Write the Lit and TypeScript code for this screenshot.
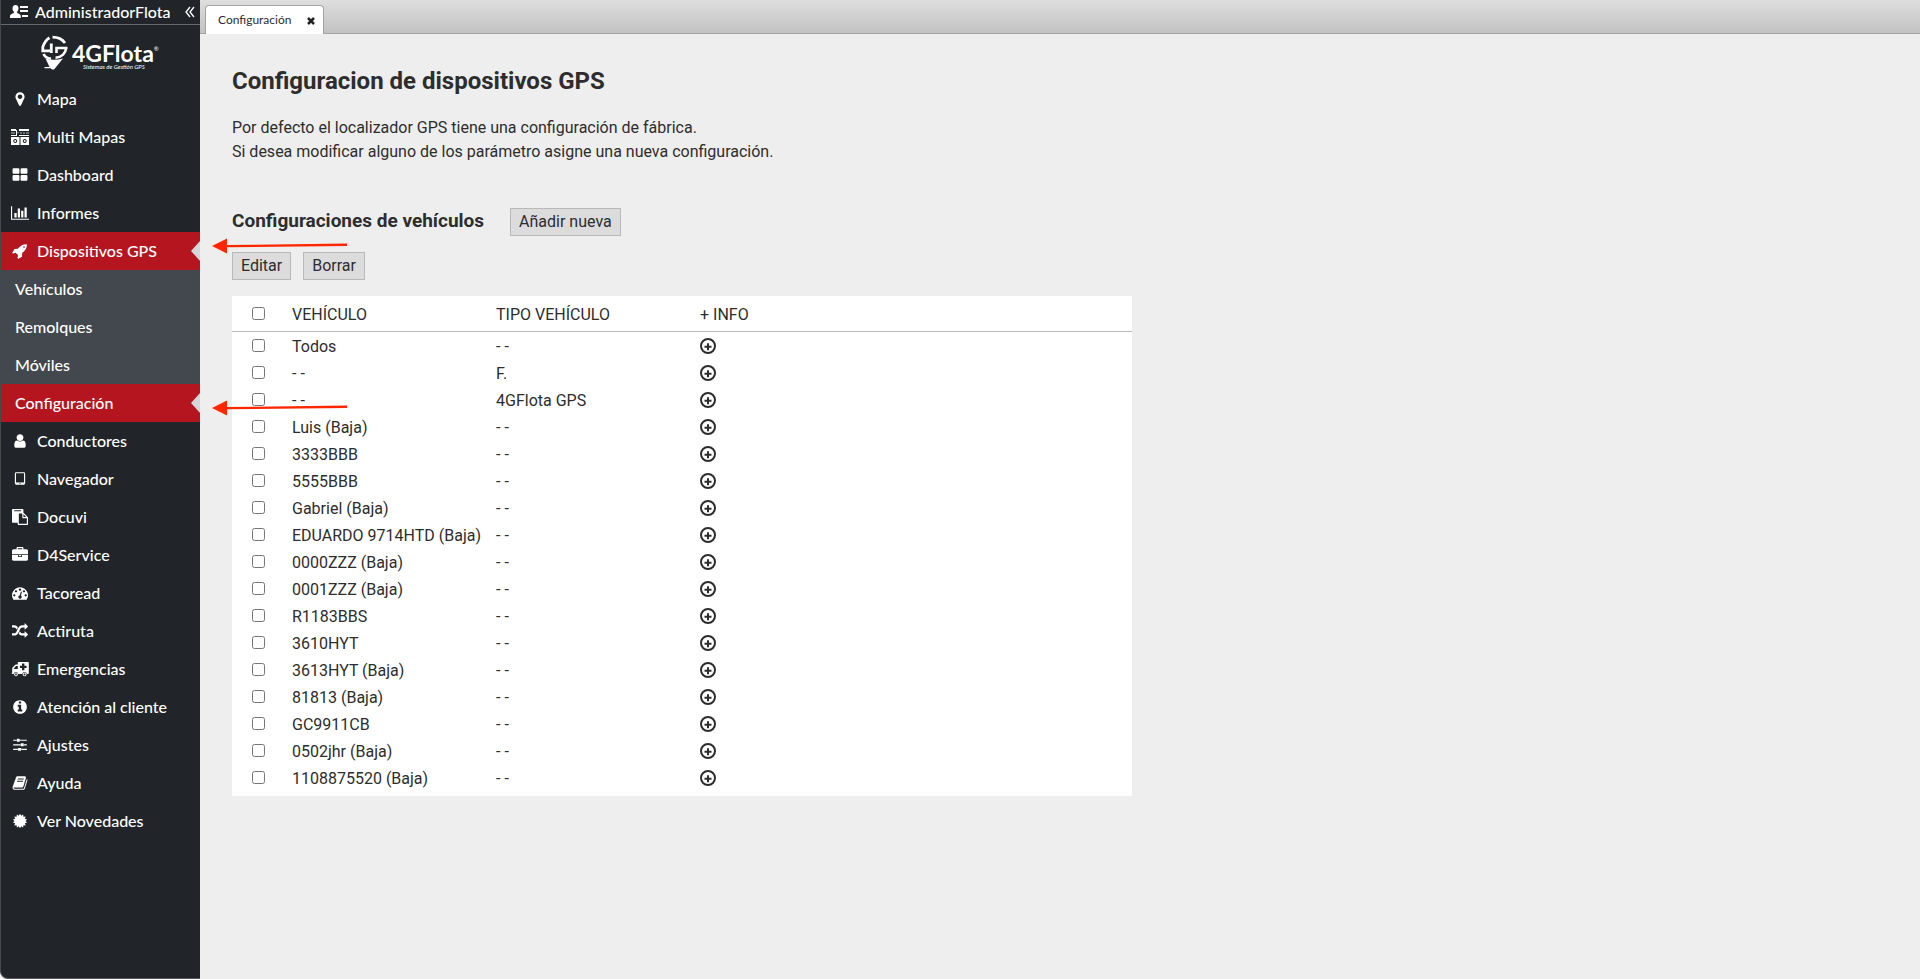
import { LitElement, html, css, svg, nothing, TemplateResult } from "lit";
import { customElement, property } from "lit/decorators.js";

const glyph = (d: string, width = 1792) => html`
  <svg class="icon" style="width:${Math.round(width / 112)}px" viewBox="0 0 ${width} 1792" aria-hidden="true">
    <path d=${d}></path>
  </svg>`;

const burst = (() => {
  const points: string[] = [];
  for (let i = 0; i < 28; i++) {
    const r = i % 2 ? 610 : 810;
    const a = (Math.PI * i) / 14;
    points.push(`${Math.round(896 + r * Math.sin(a))} ${Math.round(896 - r * Math.cos(a))}`);
  }
  return `M${points.join("L")}Z`;
})();

const icons: Record<string, TemplateResult> = {
  marker: glyph("M1152 640q0-106-75-181t-181-75-181 75-75 181 75 181 181 75 181-75 75-181zm256 0q0 109-33 179l-364 774q-16 33-47.5 52t-67.5 19-67.5-19-46.5-52l-365-774q-33-70-33-179 0-212 150-362t362-150 362 150 150 362z"),
  multi: html`<svg class="icon wide" viewBox="0 0 18 16" aria-hidden="true">
    <path d="M0 0h5v2H0zM8 0h10v2H8zM0 6h5v1H0zM8 6h10v1H8zM5 1h1v6H5z"></path>
    <path opacity=".35" d="M0 3h4v2H0zM9 3h2v2H9zM12 3h2v2h-2zM15 3h3v2h-3zM6 3h2v1H6z"></path>
    <path fill-rule="evenodd" d="M0 8h8.500v8H0zM4.200 10a2 2 0 1 0 .01 0zM9.500 8H18v8H9.500zM13.700 10a2 2 0 1 0 .01 0z"></path>
    <circle cx="4.200" cy="12" r="1"></circle><circle cx="13.700" cy="12" r="1"></circle>
  </svg>`,
  grid: glyph("M832 1024v384q0 52-38 90t-90 38h-512q-52 0-90-38t-38-90v-384q0-52 38-90t90-38h512q52 0 90 38t38 90zm0-768v384q0 52-38 90t-90 38h-512q-52 0-90-38t-38-90v-384q0-52 38-90t90-38h512q52 0 90 38t38 90zm896 768v384q0 52-38 90t-90 38h-512q-52 0-90-38t-38-90v-384q0-52 38-90t90-38h512q52 0 90 38t38 90zm0-768v384q0 52-38 90t-90 38h-512q-52 0-90-38t-38-90v-384q0-52 38-90t90-38h512q52 0 90 38t38 90z"),
  chart: glyph("M640 896v512h-256v-512h256zm384-512v1024h-256v-1024h256zm1024 1152v128h-2048v-1536h128v1408h1920zm-640-896v768h-256v-768h256zm384-384v1152h-256v-1152h256z", 2048),
  rocket: glyph("M1440 448q0-40-28-68t-68-28-68 28-28 68 28 68 68 28 68-28 28-68zm224-288q0 249-75.5 430.5t-253.5 360.5q-81 80-195 176l-20 379q-2 16-16 26l-384 224q-7 4-16 4-12 0-23-9l-64-64q-13-14-8-32l85-276-281-281-276 85q-3 1-9 1-14 0-23-9l-64-64q-17-19-5-39l224-384q10-14 26-16l379-20q96-114 176-195 188-187 358-258t431-71q14 0 24 9.500t10 22.500z"),
  user: glyph("M1536 1399q0 109-62.500 187t-150.500 78h-854q-88 0-150.500-78t-62.500-187q0-85 8.500-160.500t31.500-152 58.500-131 94-89 134.500-34.500q131 128 313 128t313-128q76 0 134.500 34.500t94 89 58.500 131 31.500 152 8.500 160.500zm-256-887q0 159-112.500 271.500t-271.500 112.500-271.500-112.500-112.500-271.500 112.500-271.500 271.500-112.500 271.500 112.500 112.500 271.500z"),
  tablet: glyph("M960 1408q0-26-19-45t-45-19-45 19-19 45 19 45 45 19 45-19 19-45zm384-160v-960q0-13-9.500-22.500t-22.500-9.500h-832q-13 0-22.500 9.500t-9.500 22.500v960q0 13 9.500 22.500t22.500 9.500h832q13 0 22.500-9.500t9.500-22.500zm128-960v1088q0 66-47 113t-113 47h-832q-66 0-113-47t-47-113v-1088q0-66 47-113t113-47h832q66 0 113 47t47 113z"),
  paste: glyph("M768 1664h896v-640h-416q-40 0-68-28t-28-68v-416h-384v1152zm256-1440v-64q0-13-9.500-22.500t-22.500-9.500h-704q-13 0-22.500 9.500t-9.500 22.500v64q0 13 9.500 22.500t22.500 9.500h704q13 0 22.500-9.500t9.500-22.500zm256 672h299l-299-299v299zm512 128v672q0 40-28 68t-68 28h-960q-40 0-68-28t-28-68v-160h-544q-40 0-68-28t-28-68v-1344q0-40 28-68t68-28h1088q40 0 68 28t28 68v328q21 13 36 28l408 408q28 28 48 76t20 88z"),
  briefcase: glyph("M640 256h512v-128h-512v128zm1152 640v480q0 66-47 113t-113 47h-1472q-66 0-113-47t-47-113v-480h672v160q0 26 19 45t45 19h320q26 0 45-19t19-45v-160h672zm-768 0v128h-256v-128h256zm768-480v384h-1792v-384q0-66 47-113t113-47h352v-160q0-40 28-68t68-28h576q40 0 68 28t28 68v160h352q66 0 113 47t47 113z"),
  gauge: glyph("M384 1152q0-53-37.500-90.500t-90.500-37.500-90.500 37.500-37.500 90.500 37.500 90.500 90.500 37.500 90.500-37.500 37.500-90.500zm192-448q0-53-37.500-90.500t-90.500-37.500-90.500 37.500-37.500 90.500 37.500 90.500 90.500 37.500 90.500-37.500 37.500-90.500zm428 481l101-382q6-26-7.500-48.500t-38.500-29.500-48 6.500-30 39.500l-101 382q-60 5-107 43.500t-63 98.500q-20 77 20 146t117 89 146-20 89-117q16-60-6-117t-72-91zm660-33q0-53-37.500-90.500t-90.500-37.500-90.500 37.500-37.500 90.500 37.500 90.500 90.500 37.500 90.500-37.500 37.500-90.500zm-640-640q0-53-37.500-90.500t-90.500-37.500-90.500 37.500-37.500 90.500 37.500 90.500 90.500 37.500 90.500-37.500 37.500-90.500zm448 192q0-53-37.500-90.500t-90.500-37.500-90.500 37.500-37.500 90.500 37.500 90.500 90.500 37.500 90.500-37.500 37.500-90.500zm320 448q0 261-141 483-19 29-54 29h-1402q-35 0-54-29-141-221-141-483 0-182 71-348t191-286 286-191 348-71 348 71 286 191 191 286 71 348z"),
  random: glyph("M666 481q-60 92-137 273-22-45-37-72.500t-40.500-63.500-51-56.500-63-35-81.500-14.500h-224q-14 0-23-9t-9-23v-192q0-14 9-23t23-9h224q250 0 410 225zm1126 799q0 14-9 23l-320 320q-9 9-23 9-13 0-22.500-9.500t-9.500-22.500v-192q-32 0-85 .5t-81 1-73-1-71-5-64-10.500-63-18.500-58-28.500-59-40-55-53.500-56-69.500q59-93 136-273 22 45 37 72.500t40.500 63.500 51 56.500 63 35 81.500 14.500h256v-192q0-14 9-23t23-9q12 0 24 10l319 319q9 9 9 23zm0-896q0 14-9 23l-320 320q-9 9-23 9-13 0-22.500-9.500t-9.500-22.500v-192h-256q-48 0-87 15t-69 45-51 61.500-45 77.500q-32 62-78 171-29 66-49.500 111t-54 105-64 100-74 83-90 68.500-106.500 42-128 16.500h-224q-14 0-23-9t-9-23v-192q0-14 9-23t23-9h224q48 0 87-15t69-45 51-61.500 45-77.500q32-62 78-171 29-66 49.500-111t54-105 64-100 74-83 90-68.500 106.500-42 128-16.500h256v-192q0-14 9-23t23-9q12 0 24 10l319 319q9 9 9 23z"),
  ambulance: html`<svg class="icon wide" viewBox="0 0 18 16" aria-hidden="true">
    <path fill-rule="evenodd" d="M7.500 1H17q.8 0 .8.800V12.300q0 .6-.7.600h-1.200a2.400 2.400 0 0 0-4.700 0H7.300a2.400 2.400 0 0 0-4.700 0H1.300q-.6 0-.6-.6.5-.5.5-1V7.300q0-.5.4-.9L4 4q.4-.4.9-.4h1.900V1.700q0-.7.700-.7zM2.500 8h4.300V5H5zM11 2.500v2.200H8.900V7H11v2.200h2.400V7h2.200V4.700h-2.200V2.500z"></path>
    <path fill-rule="evenodd" d="M5 11.500a1.900 1.900 0 1 0 .01 0zm0 1a.9.9 0 1 1-.01 0zM13.600 11.500a1.900 1.900 0 1 0 .01 0zm0 1a.9.9 0 1 1-.01 0z"></path>
  </svg>`,
  info: glyph("M1152 1376v-160q0-14-9-23t-23-9h-96v-512q0-14-9-23t-23-9h-320q-14 0-23 9t-9 23v160q0 14 9 23t23 9h96v320h-96q-14 0-23 9t-9 23v160q0 14 9 23t23 9h448q14 0 23-9t9-23zm-128-896v-160q0-14-9-23t-23-9h-192q-14 0-23 9t-9 23v160q0 14 9 23t23 9h192q14 0 23-9t9-23zm640 416q0 209-103 385.500t-279.500 279.500-385.500 103-385.500-103-279.500-279.500-103-385.500 103-385.500 279.500-279.500 385.500-103 385.500 103 279.500 279.500 103 385.500z"),
  sliders: glyph("M128 300h384v128H128zM576 200h256q40 0 40 40v240q0 40-40 40H576q-40 0-40-40V240q0-40 40-40zM900 300h764v128H900zM128 812h830v128H128zM1020 712h256q40 0 40 40v240q0 40-40 40h-256q-40 0-40-40V752q0-40 40-40zM1344 812h320v128h-320zM128 1324h530v128H128zM720 1224h256q40 0 40 40v240q0 40-40 40H720q-40 0-40-40v-240q0-40 40-40zM1044 1324h620v128h-620z"),
  book: glyph("M1703 478q40 57 18 129l-275 906q-19 64-76.500 107.500t-122.500 43.500h-923q-77 0-148.500-53.500t-99.500-131.500q-24-67-2-127 0-4 3-27t4-37q1-8-3-21.500t-3-19.500q2-11 8-21t16.500-23.500 16.500-23.500q23-38 45-91.500t30-91.500q3-10 .5-30t-.5-28q3-11 17-28t17-23q21-36 42-92t25-90q1-9-2.500-32t.5-28q4-13 22-30.500t22-22.500q19-26 42.500-84.500t27.500-96.500q1-8-3-25.500t-2-26.500q2-8 9-18t18-23 17-21q8-12 16.500-30.500t15-35 16-36 19.500-32 26.500-23.500 36-11.500 47.500 5.500l-1 3q38-9 51-9h761q74 0 114 56t18 130l-274 906q-36 119-71.500 153.500t-128.500 34.500h-869q-27 0-38 15-11 16-1 43 24 70 144 70h923q29 0 56-15.500t35-41.500l300-987q7-22 5-57 38 15 59 43zm-1064 2q-4 13 2 22.500t20 9.500h608q13 0 25.500-9.500t16.500-22.500l21-64q4-13-2-22.500t-20-9.500h-608q-13 0-25.500 9.500t-16.500 22.500zm-83 256q-4 13 2 22.500t20 9.500h608q13 0 25.500-9.500t16.500-22.500l21-64q4-13-2-22.500t-20-9.500h-608q-13 0-25.500 9.500t-16.500 22.500z"),
  burst: glyph(burst),
};

interface Entry {
  label: string;
  icon?: string;
  active?: boolean;
  children?: Entry[];
}

const MENU: Entry[] = [
  { label: "Mapa", icon: "marker" },
  { label: "Multi Mapas", icon: "multi" },
  { label: "Dashboard", icon: "grid" },
  { label: "Informes", icon: "chart" },
  {
    label: "Dispositivos GPS",
    icon: "rocket",
    active: true,
    children: [
      { label: "Vehículos" },
      { label: "Remolques" },
      { label: "Móviles" },
      { label: "Configuración", active: true },
    ],
  },
  { label: "Conductores", icon: "user" },
  { label: "Navegador", icon: "tablet" },
  { label: "Docuvi", icon: "paste" },
  { label: "D4Service", icon: "briefcase" },
  { label: "Tacoread", icon: "gauge" },
  { label: "Actiruta", icon: "random" },
  { label: "Emergencias", icon: "ambulance" },
  { label: "Atención al cliente", icon: "info" },
  { label: "Ajustes", icon: "sliders" },
  { label: "Ayuda", icon: "book" },
  { label: "Ver Novedades", icon: "burst" },
];

const ROWS: [string, string][] = [
  ["Todos", "- -"],
  ["- -", "F."],
  ["- -", "4GFlota GPS"],
  ["Luis (Baja)", "- -"],
  ["3333BBB", "- -"],
  ["5555BBB", "- -"],
  ["Gabriel (Baja)", "- -"],
  ["EDUARDO 9714HTD (Baja)", "- -"],
  ["0000ZZZ (Baja)", "- -"],
  ["0001ZZZ (Baja)", "- -"],
  ["R1183BBS", "- -"],
  ["3610HYT", "- -"],
  ["3613HYT (Baja)", "- -"],
  ["81813 (Baja)", "- -"],
  ["GC9911CB", "- -"],
  ["0502jhr (Baja)", "- -"],
  ["1108875520 (Baja)", "- -"],
];

@customElement("side-menu")
export class SideMenu extends LitElement {
  @property({ attribute: false }) entries: Entry[] = [];

  static styles = css`
    :host {
      display: block;
      flex: none;
      width: 200px;
      box-sizing: border-box;
      border-left: 1px solid #45494c;
      border-bottom: 1px solid #55575a;
      border-bottom-left-radius: 8px;
      background: #212529;
      color: #fff;
      font: 500 16px/20px Lato, sans-serif;
    }
    .account {
      display: flex;
      align-items: center;
      height: 24px;
      padding: 0 5px 0 9px;
      border-bottom: 1px solid #66696c;
    }
    .account svg { flex: none; fill: #fff; }
    .name { flex: 1; padding-left: 7px; }
    .fold {
      padding: 0;
      border: 0;
      background: none;
      display: flex;
    }
    .logo {
      display: flex;
      gap: 4px;
      height: 45px;
      padding: 10px 0 0 40px;
    }
    .logo svg { flex: none; fill: #fff; }
    .brand {
      display: grid;
      align-content: start;
      font: 700 23px/22px Lato, sans-serif;
      padding-top: 7px;
    }
    .word { display: flex; }
    .reg { font: 6px/14px Lato, sans-serif; }
    .tag {
      font: italic 6px/6px Lato, sans-serif;
      padding-left: 11px;
    }
    ul { list-style: none; margin: 0; padding: 0; }
    a {
      display: flex;
      align-items: center;
      height: 38px;
      padding-left: 9px;
      color: inherit;
      text-decoration: none;
      position: relative;
    }
    .slot {
      display: flex;
      justify-content: center;
      width: 20px;
      margin-right: 7px;
    }
    .icon { flex: none; width: 16px; height: 16px; fill: #fff; }
    .wide { width: 18px; }
    .sub { background: #42484e; }
    .sub a { padding-left: 14px; }
    .active { background: #b5151f; }
    .active::after {
      content: "";
      position: absolute;
      right: 0;
      top: 9px;
      border: solid transparent;
      border-width: 10px 9px 10px 0;
      border-right-color: #d6d6d6;
    }
  `;

  private entry(e: Entry): TemplateResult {
    return html`<li>
      <a href="#" class=${e.active ? "active" : ""}>
        ${e.icon ? html`<span class="slot">${icons[e.icon]}</span>` : nothing}<span>${e.label}</span>
      </a>
      ${e.children ? html`<ul class="sub">${e.children.map((c) => this.entry(c))}</ul>` : nothing}
    </li>`;
  }

  render() {
    return html`
      <div class="account">
        <svg width="18" height="14" viewBox="0 0 18 14" aria-hidden="true">
          <path d="M5.500 0c2 0 3 1.400 3 3.300 0 1.600-.6 2.700-1.400 3.500v1.300c1.900.8 3.700 1.300 3.700 3.100V13H0v-1.800c0-1.800 2-2.300 3.900-3.100V6.800C3 6 2.500 4.900 2.500 3.300 2.500 1.400 3.500 0 5.500 0zM10 1h8v2h-8zM10 5h8v2h-8zM12 10h6v2h-6z"></path>
        </svg>
        <span class="name">AdministradorFlota</span>
        <button class="fold" aria-label="Contraer menú">
          <svg width="10" height="12" viewBox="0 0 10 12" aria-hidden="true">
            <path fill="none" stroke="#fff" stroke-width="1.300" d="M5 1 1 6l4 5M9 1 5 6l4 5"></path>
          </svg>
        </button>
      </div>
      <div class="logo">
        <svg width="27" height="35" viewBox="0 0 27 35" aria-hidden="true">
          <path fill="none" stroke="#fff" stroke-width="2.800" d="M8.500 2.800C5.500 4.500 3.500 7 1.800 12v3.800H9M10.300 8.500v9.500M11.500 2.200c5 0 9.500 1.800 12.500 5.800"></path>
          <path fill="none" stroke="#fff" stroke-width="2.600" d="M26.500 13H15.500v5M25 13.500c-.3 4.500-4 8.800-10.500 9.200M2.500 19c1.200 2.500 4 4.300 7.500 4.800"></path>
          <path d="M4.500 23.500q8 2.500 17.500 0L13 34.500H11L8.500 32zM3.500 32h7v1.200h-7z"></path>
        </svg>
        <div class="brand">
          <div class="word">4GFlota<span class="reg">®</span></div>
          <div class="tag">Sistemas de Gestión GPS</div>
        </div>
      </div>
      <nav><ul>${this.entries.map((e) => this.entry(e))}</ul></nav>
    `;
  }
}

@customElement("vehicle-table")
export class VehicleTable extends LitElement {
  @property({ attribute: false }) rows: [string, string][] = [];

  static styles = css`
    :host {
      display: block;
      max-width: 900px;
      padding-bottom: 5px;
      background: #fff;
    }
    table { width: 100%; border-collapse: collapse; table-layout: fixed; }
    .pick { width: 60px; }
    .text { width: 204px; }
    th, td {
      height: 25px;
      padding: 2px 0 0;
      text-align: left;
      font-weight: 400;
      line-height: 24px;
      white-space: nowrap;
    }
    th { height: 33px; border-bottom: 1px solid #b9b9b9; }
    input { display: block; width: 13px; height: 13px; margin: 0 0 2px 20px; }
    button { display: block; margin-bottom: 2px; padding: 0; border: 0; background: none; }
    svg { display: block; fill: none; stroke: #2d2d2d; stroke-width: 2; }
  `;

  render() {
    return html`<table>
      <colgroup><col class="pick" /><col class="text" /><col class="text" /><col /></colgroup>
      <thead>
        <tr>
          <th><input type="checkbox" aria-label="Seleccionar todos" /></th>
          <th>VEHÍCULO</th>
          <th>TIPO VEHÍCULO</th>
          <th>+ INFO</th>
        </tr>
      </thead>
      <tbody>
        ${this.rows.map(
          ([name, type]) => html`<tr>
            <td><input type="checkbox" aria-label=${name} /></td>
            <td>${name}</td>
            <td>${type}</td>
            <td>
              <button aria-label="Más información">
                <svg width="16" height="16" viewBox="0 0 16 16">
                  <circle cx="8" cy="8" r="7"></circle>
                  <path d="M4.500 8.800h7M8 5.300v7"></path>
                </svg>
              </button>
            </td>
          </tr>`
        )}
      </tbody>
    </table>`;
  }
}

@customElement("app-root")
export class AppRoot extends LitElement {
  static styles = css`
    :host {
      display: flex;
      min-height: 100vh;
      background: #eee;
      color: #2d2d2d;
      font: 16px/24px Roboto, sans-serif;
    }
    .page { flex: 1; min-width: 0; position: relative; }
    .tabs {
      display: flex;
      align-items: flex-end;
      height: 33px;
      padding-left: 5px;
      border-bottom: 1px solid #a3a3a3;
      background: linear-gradient(#dedede, #c2c2c2);
    }
    .tab {
      display: flex;
      align-items: center;
      gap: 16px;
      box-sizing: border-box;
      height: 29px;
      margin-bottom: -1px;
      padding: 0 8px 0 12px;
      border: 1px solid #a3a3a3;
      border-bottom: 0;
      border-radius: 4px 4px 0 0;
      background: #fff;
      font: 12px/16px Lato, sans-serif;
    }
    button { font: inherit; color: inherit; }
    .close { display: flex; padding: 2px 0 0; border: 0; background: none; }
    main { padding: 33px 32px; }
    h1, h2, p { margin: 0; }
    h1 { font-size: 24px; line-height: 28px; }
    h2 { font-size: 19px; line-height: 24px; padding-bottom: 2px; }
    p { margin: 21px 0 44px; }
    .head { display: flex; align-items: center; gap: 26px; }
    .actions { display: flex; gap: 12px; margin: 16px 0; }
    .btn {
      height: 28px;
      padding: 0 8px;
      border: 1px solid #b9b9b9;
      background: #dcdcdc;
      line-height: 24px;
    }
    .arrow { position: absolute; left: 12px; pointer-events: none; }
    .first { top: 238px; }
    .second { top: 400px; }
  `;

  private arrow(name: string) {
    return html`<svg class="arrow ${name}" width="136" height="16" viewBox="0 0 136 16" aria-hidden="true">
      ${svg`<path fill="#ff2600" d="M0 8 15 0.500V7L135 5.500V8L15 9.300V15.500z"></path>`}
    </svg>`;
  }

  render() {
    return html`
      <side-menu .entries=${MENU}></side-menu>
      <div class="page">
        <div class="tabs">
          <div class="tab">
            <span>Configuración</span>
            <button class="close" aria-label="Cerrar">
              <svg width="8" height="8" viewBox="0 0 8 8"><path stroke="#222" stroke-width="2.500" d="m1 1 6 6M7 1 1 7"></path></svg>
            </button>
          </div>
        </div>
        <main>
          <h1>Configuracion de dispositivos GPS</h1>
          <p>
            Por defecto el localizador GPS tiene una configuración de fábrica.<br />
            Si desea modificar alguno de los parámetro asigne una nueva configuración.
          </p>
          <div class="head">
            <h2>Configuraciones de vehículos</h2>
            <button class="btn">Añadir nueva</button>
          </div>
          <div class="actions">
            <button class="btn">Editar</button>
            <button class="btn">Borrar</button>
          </div>
          <vehicle-table .rows=${ROWS}></vehicle-table>
        </main>
        ${this.arrow("first")} ${this.arrow("second")}
      </div>
    `;
  }
}
